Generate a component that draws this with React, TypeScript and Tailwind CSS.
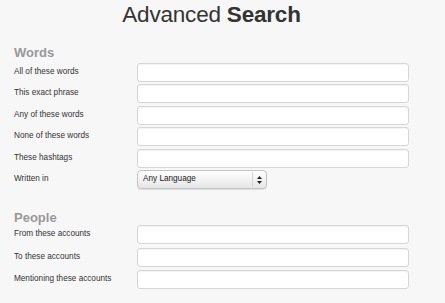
import React from "react";

const font = { fontFamily: '"Liberation Sans", Arial, sans-serif' };

function Row({ label, children }: { label: string; children: React.ReactNode }) {
  return (
    <div className="flex items-center h-[19px]">
      <div className="w-[123px] text-[8.2px] text-[#333] leading-none">{label}</div>
      {children}
    </div>
  );
}

function Input() {
  return <div className="w-[272px] h-[19px] bg-white border border-[#d6d6d6] rounded-[3px] shadow-[inset_0_1px_1px_rgba(0,0,0,0.05)]" />;
}

export default function App() {
  return (
    <div className="w-[445px] h-[303px] bg-[#f7f7f7] overflow-hidden" style={font}>
      <div className="ml-[14px] w-[395px]">
        <h1 className="text-center text-[22.5px] leading-none text-[#333] pt-[4px] tracking-[-0.2px]">
          Advanced <span className="font-bold">Search</span>
        </h1>
        <h2 className="mt-[19px] text-[13px] font-bold text-[#999] leading-none">Words</h2>
        <div className="mt-[4px] flex flex-col gap-[2.5px]">
          <Row label="All of these words"><Input /></Row>
          <Row label="This exact phrase"><Input /></Row>
          <Row label="Any of these words"><Input /></Row>
          <Row label="None of these words"><Input /></Row>
          <Row label="These hashtags"><Input /></Row>
          <Row label="Written in">
            <div className="w-[130px] h-[19px] rounded-[4px] border border-[#c4c4c4] bg-gradient-to-b from-white to-[#e6e6e6] shadow-[0_1px_1px_rgba(0,0,0,0.1)] flex items-center justify-between pl-[5px] pr-[4px]">
              <span className="text-[8.2px] text-[#222] leading-none">Any Language</span>
              <div className="flex items-center h-full">
                <div className="w-px h-[15px] bg-[#d4d4d4] mr-[4px]" />
                <svg width="5" height="8" viewBox="0 0 5 8">
                  <path d="M2.5 0 L5 3 L0 3 Z" fill="#222" />
                  <path d="M2.5 8 L5 5 L0 5 Z" fill="#222" />
                </svg>
              </div>
            </div>
          </Row>
        </div>
        <h2 className="mt-[22px] text-[13px] font-bold text-[#999] leading-none">People</h2>
        <div className="mt-[1px] flex flex-col gap-[3.5px]">
          <Row label="From these accounts"><Input /></Row>
          <Row label="To these accounts"><Input /></Row>
          <Row label="Mentioning these accounts"><Input /></Row>
        </div>
      </div>
    </div>
  );
}
